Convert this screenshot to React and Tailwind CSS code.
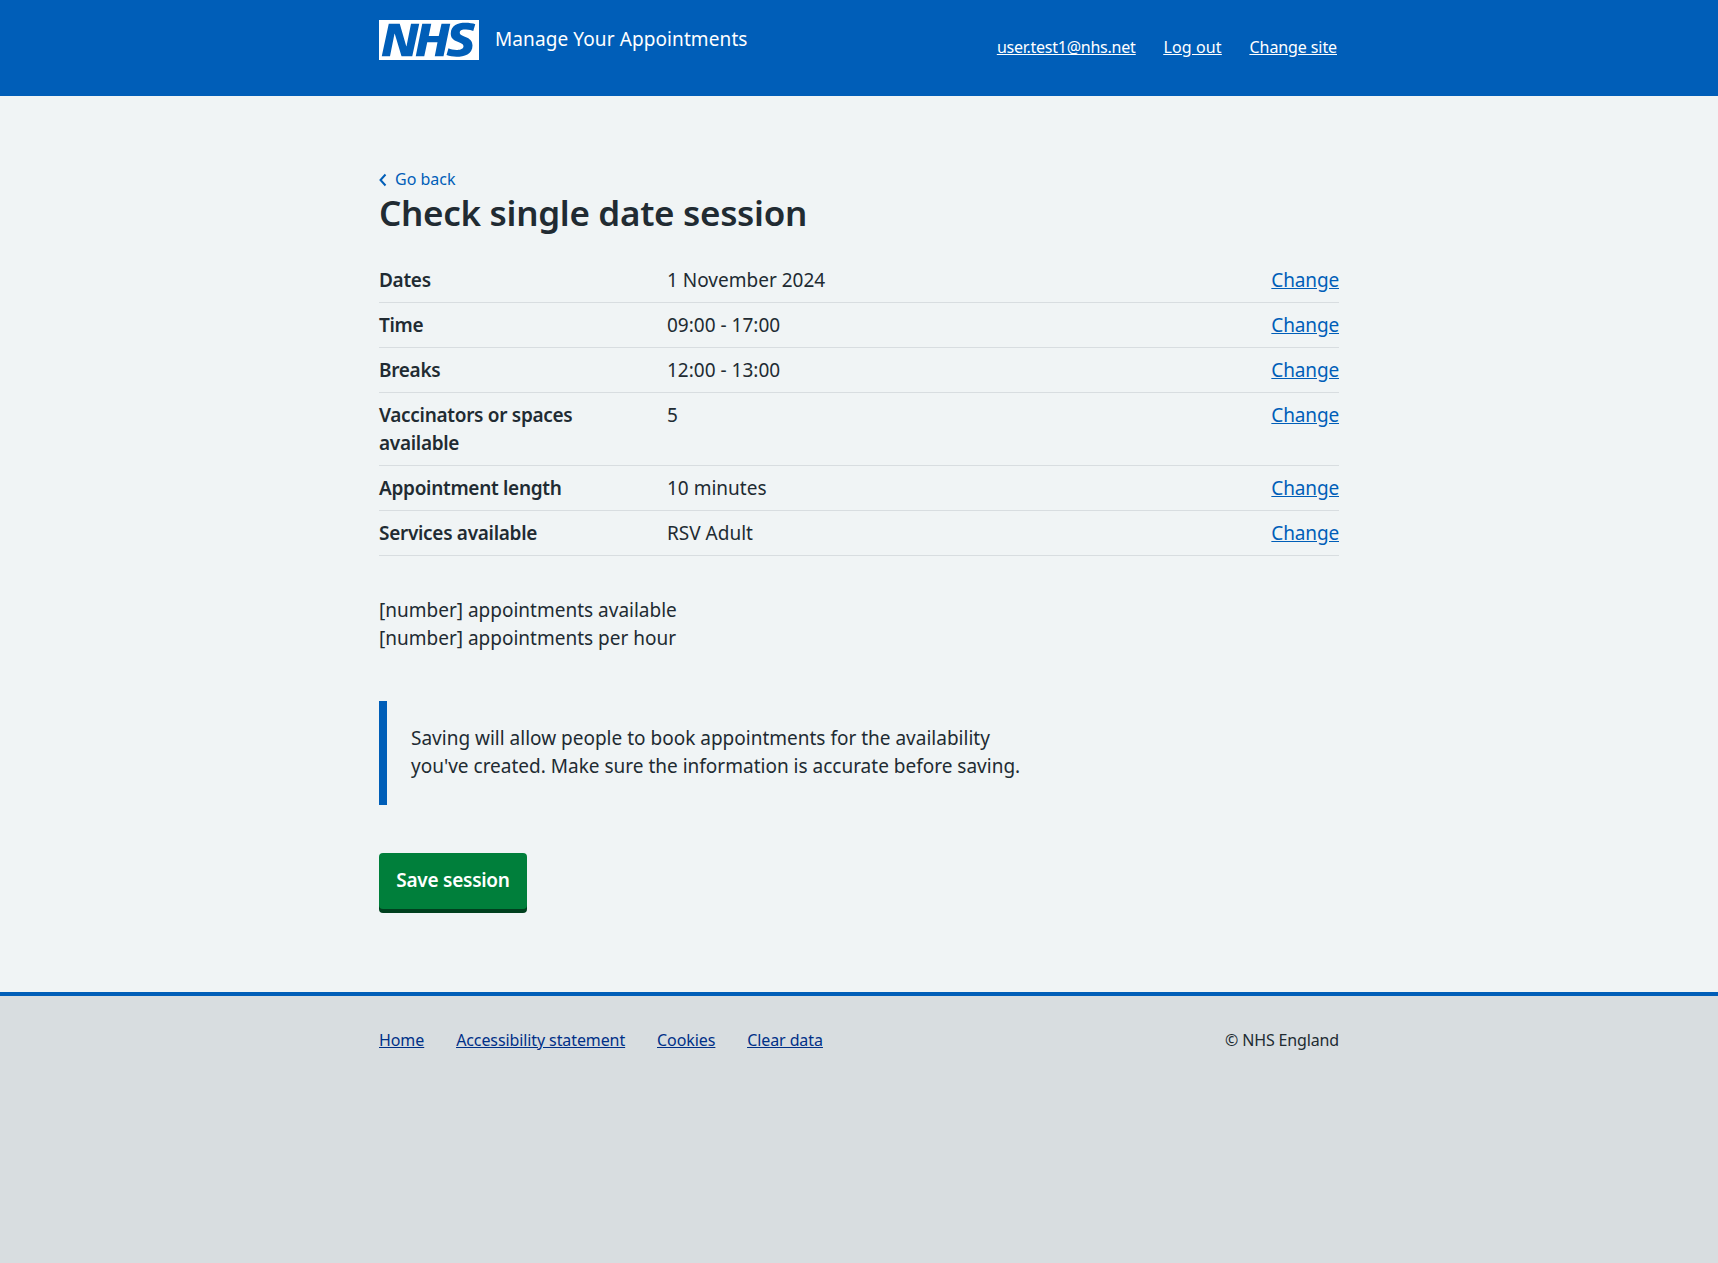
import React from 'react';

const rows=[
  {label: 'Dates', value: '1 November 2024'},
  {label: 'Time', value: '09:00 - 17:00'},
  {label: 'Breaks', value: '12:00 - 13:00'},
  {label: 'Vaccinators or spaces available', value: '5'},
  {label: 'Appointment length', value: '10 minutes'},
  {label: 'Services available', value: 'RSV Adult'},
];

const NhsLogo=() => (
  <svg className="w-[100px] h-[40px] block" viewBox="0 0 40 16" aria-label="NHS">
    <path fill="#fff" d="M0 0h40v16H0z" />
    <path fill="#005eb8" d="M3.9 1.5h4.4l2.6 9h.1l1.8-9h3.3l-2.8 13H9l-2.7-9h-.1l-1.8 9H1.1M17.3 1.5h3.6l-1 4.9h4L25 1.5h3.5l-2.7 13h-3.5l1.1-5.6h-4.1l-1.2 5.6h-3.4M37.7 4.4c-.7-.3-1.6-.6-2.9-.6-1.4 0-2.5.2-2.5 1.3 0 1.8 5.1 1.2 5.1 5.1 0 3.6-3.3 4.5-6.4 4.5-1.3 0-2.9-.3-4-.7l.8-2.7c.7.4 2.1.7 3.2.7s2.8-.2 2.8-1.5c0-2.1-5.1-1.3-5.1-5 0-3.4 2.9-4.4 5.8-4.4 1.6 0 3.1.2 4 .6" />
  </svg>
);

export default function App() {
  return (
    <div className="min-h-[1263px] flex flex-col bg-[#f0f4f5] text-[#212b32] font-['Noto_Sans',sans-serif] text-[19px] leading-[28px]">
      <header className="bg-[#005eb8] h-[96px] shrink-0">
        <div className="w-[960px] mx-auto flex justify-between">
          <div className="flex items-center gap-4 pt-5">
            <NhsLogo />
            <span className="text-white text-[19px] leading-[40px] tracking-[0.1px] -mt-[2px]">Manage Your Appointments</span>
          </div>
          <nav className="flex gap-7 pt-[35px] pr-[2px] text-white text-[16px] leading-[24px] underline">
            <a href="#" className="tracking-[-0.25px]">user.test1@nhs.net</a>
            <a href="#" className="tracking-[0.1px]">Log out</a>
            <a href="#" className="tracking-[-0.1px]">Change site</a>
          </nav>
        </div>
      </header>

      <main className="flex-1 w-[960px] mx-auto pt-[71px]">
        <a href="#" className="flex items-center gap-2 text-[#005eb8] text-[16px] leading-[24px]">
          <svg className="w-[8px] h-[14px] mt-[2px]" viewBox="0 0 8 14" fill="none" stroke="#005eb8" strokeWidth="2">
            <path d="M6.5 1.5 1.5 7l5 5.5" />
          </svg>
          Go back
        </a>
        <h1 className="text-[35px] leading-[44px] tracking-[-0.3px] font-semibold mb-[23px]">Check single date session</h1>

        <dl className="mb-10">
          {rows.map((row) => (
            <div key={row.label} className="flex border-b border-[#d8dde0] pt-2 pb-2">
              <dt className="w-[288px] pr-6 font-semibold tracking-[-0.3px]">{row.label}</dt>
              <dd className="flex-1">{row.value}</dd>
              <dd><a href="#" className="text-[#005eb8] underline tracking-[-0.15px]">Change</a></dd>
            </div>
          ))}
        </dl>

        <p>[number] appointments available</p>
        <p>[number] appointments per hour</p>

        <div className="mt-[49px] mb-12 border-l-8 border-[#005eb8] pl-6 pt-[23px] pb-[25px] w-[660px]">
          <p>Saving will allow people to book appointments for the availability you've created. Make sure the information is accurate before saving.</p>
        </div>

        <button className="bg-[#007f3b] text-white font-semibold tracking-[-0.25px] rounded-[4px] w-[148px] h-[56px] pb-[2px] shadow-[0_4px_0_#00401e] mb-[80px]">Save session</button>
      </main>

      <footer className="bg-[#d8dde0] border-t-4 border-[#005eb8] h-[271px] shrink-0">
        <div className="w-[960px] mx-auto flex justify-between pt-[32px] text-[16px] leading-[24px]">
          <div className="flex gap-8 text-[#003087] underline tracking-[-0.1px]">
            <a href="#">Home</a>
            <a href="#">Accessibility statement</a>
            <a href="#">Cookies</a>
            <a href="#">Clear data</a>
          </div>
          <span className="tracking-[-0.15px]">© NHS England</span>
        </div>
      </footer>
    </div>
  );
}
